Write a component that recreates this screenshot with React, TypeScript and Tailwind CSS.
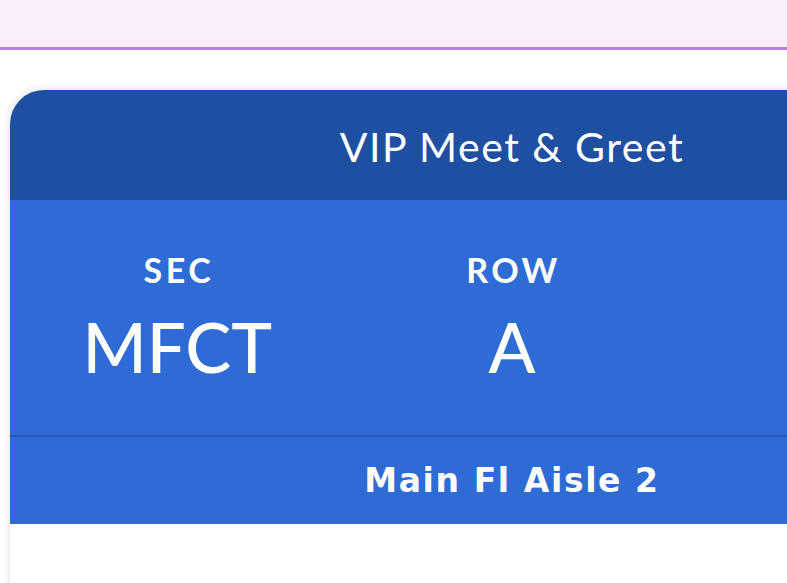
const seats = [
  { label: 'SEC', value: 'MFCT' },
  { label: 'ROW', value: 'A' },
  { label: 'SEAT', value: '4' },
];

export default function App() {
  return (
    <div className="min-h-[583px] overflow-hidden bg-white font-['Lato',sans-serif]">
      {/* top app bar */}
      <div className="h-[50px] border-b-[3px] border-[#b77fe2] bg-[#f8eefc]" />

      <div className="pt-[40px] pl-[10px]">
        <div className="w-[1004px] min-h-[520px] rounded-t-[34px] bg-white shadow-[0_0_10px_rgba(0,0,0,0.14)]">
          <div className="flex h-[110px] items-center justify-center rounded-t-[34px] bg-[#1f4fa0] pt-[3px]">
            <span className="text-[41px] font-normal tracking-[1.5px] text-white">VIP Meet &amp; Greet</span>
          </div>

          <div className="bg-[#2e6bd5]">
            <div className="grid h-[237px] grid-cols-3 border-b-[2px] border-[#2556b3] pt-[50px]">
              {seats.map((s) => (
                <div key={s.label} className="flex flex-col items-center text-white">
                  <span className="pl-[3px] text-[34px] font-bold leading-[40px] tracking-[3.5px]">{s.label}</span>
                  <span className="mt-[22px] text-[69px] font-medium leading-[69px]">{s.value}</span>
                </div>
              ))}
            </div>
            <div className="flex h-[87px] items-center justify-center">
              <span className="font-['DejaVu_Sans',sans-serif] text-[33px] font-bold tracking-[1.6px] text-white">Main Fl Aisle 2</span>
            </div>
          </div>
        </div>
      </div>
    </div>
  );
}
